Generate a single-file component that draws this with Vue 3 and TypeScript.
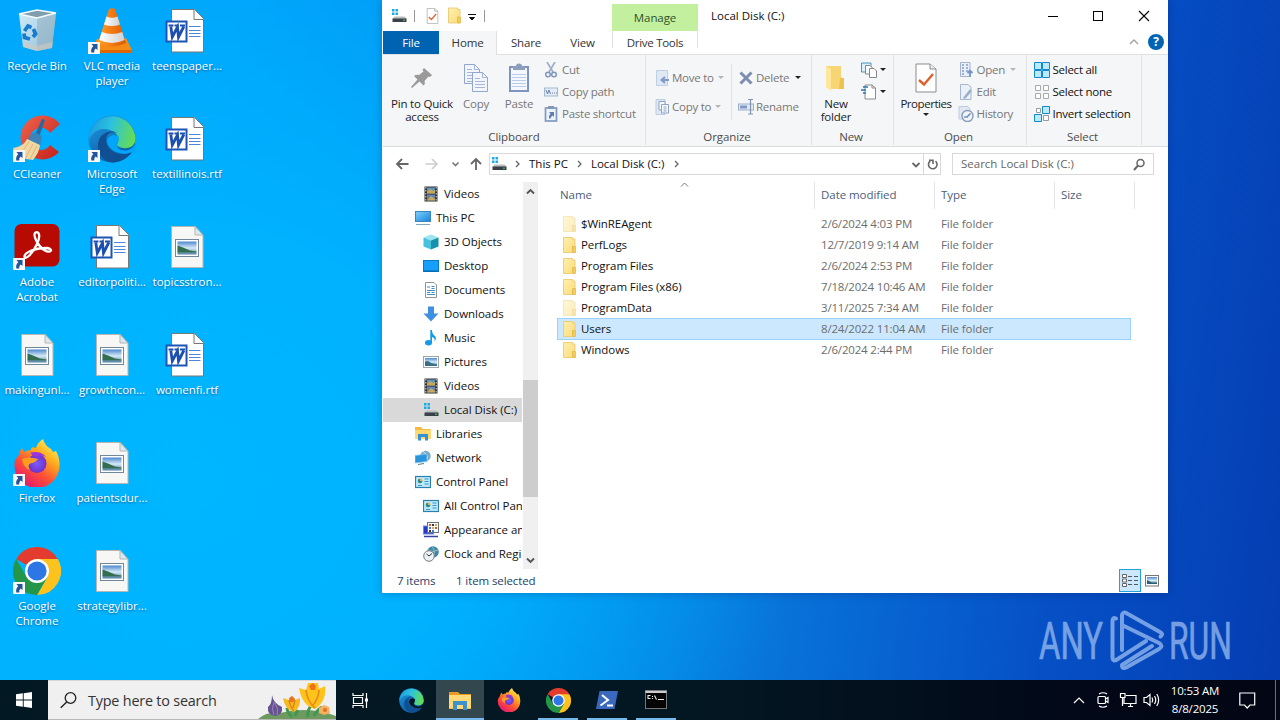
<script setup lang="ts">
interface DesktopItem { icon: string; lines: string[]; shortcut?: boolean }
interface TreeItem { icon: string; label: string; level: number; selected?: boolean }
interface FileRow { name: string; date: string; faded?: boolean; selected?: boolean }
interface Task { icon: string; size: number; state: string }

const desktop: (DesktopItem | null)[] = [
  { icon: 'recycle', lines: ['Recycle Bin'] },
  { icon: 'vlc', lines: ['VLC media', 'player'], shortcut: true },
  { icon: 'word', lines: ['teenspaper...'] },
  { icon: 'ccleaner', lines: ['CCleaner'], shortcut: true },
  { icon: 'edge', lines: ['Microsoft', 'Edge'], shortcut: true },
  { icon: 'word', lines: ['textillinois.rtf'] },
  { icon: 'acrobat', lines: ['Adobe', 'Acrobat'], shortcut: true },
  { icon: 'word', lines: ['editorpoliti...'] },
  { icon: 'image', lines: ['topicsstron...'] },
  { icon: 'image', lines: ['makingunl...'] },
  { icon: 'image', lines: ['growthcon...'] },
  { icon: 'word', lines: ['womenfi.rtf'] },
  { icon: 'firefox', lines: ['Firefox'], shortcut: true },
  { icon: 'image', lines: ['patientsdur...'] },
  null,
  { icon: 'chrome', lines: ['Google', 'Chrome'], shortcut: true },
  { icon: 'image', lines: ['strategylibr...'] },
  null,
]

const tree: TreeItem[] = [
  { icon: 'film', label: 'Videos', level: 2 },
  { icon: 'pc', label: 'This PC', level: 1 },
  { icon: 'cube', label: '3D Objects', level: 2 },
  { icon: 'desk', label: 'Desktop', level: 2 },
  { icon: 'doc', label: 'Documents', level: 2 },
  { icon: 'down', label: 'Downloads', level: 2 },
  { icon: 'music', label: 'Music', level: 2 },
  { icon: 'pics', label: 'Pictures', level: 2 },
  { icon: 'film', label: 'Videos', level: 2 },
  { icon: 'drive', label: 'Local Disk (C:)', level: 2, selected: true },
  { icon: 'libs', label: 'Libraries', level: 1 },
  { icon: 'net', label: 'Network', level: 1 },
  { icon: 'cpl', label: 'Control Panel', level: 1 },
  { icon: 'cpl', label: 'All Control Pan', level: 2 },
  { icon: 'appear', label: 'Appearance an', level: 2 },
  { icon: 'clock', label: 'Clock and Regi', level: 2 },
]

const files: FileRow[] = [
  { name: '$WinREAgent', date: '2/6/2024 4:03 PM', faded: true },
  { name: 'PerfLogs', date: '12/7/2019 9:14 AM' },
  { name: 'Program Files', date: '2/6/2024 2:53 PM' },
  { name: 'Program Files (x86)', date: '7/18/2024 10:46 AM' },
  { name: 'ProgramData', date: '3/11/2025 7:34 AM', faded: true },
  { name: 'Users', date: '8/24/2022 11:04 AM', selected: true },
  { name: 'Windows', date: '2/6/2024 2:44 PM' },
]

const tasks: Task[] = [
  { icon: 'edge', size: 25, state: '' },
  { icon: 'explorer', size: 24, state: 'active' },
  { icon: 'firefox', size: 24, state: '' },
  { icon: 'chrome', size: 25, state: 'open' },
  { icon: 'pshell', size: 24, state: 'open' },
  { icon: 'cmd', size: 24, state: 'open' },
]
</script>

<template>
  <main class="screen">
    <svg class="sheet" width="0" height="0">
      <defs>
        <linearGradient id="gBin" x1="0" y1="0" x2="1" y2="1"><stop offset="0" stop-color="#f2f6f8" /><stop offset="1" stop-color="#a9c3d3" /></linearGradient>
        <linearGradient id="gCone" x1="0" x2="1"><stop offset="0" stop-color="#ffa32b" /><stop offset=".45" stop-color="#f57c12" /><stop offset="1" stop-color="#d95a06" /></linearGradient>
        <linearGradient id="gWhite" x1="0" x2="1"><stop offset="0" stop-color="#fff" /><stop offset="1" stop-color="#cfcfcf" /></linearGradient>
        <linearGradient id="gEdgeTop" x1="0" y1=".3" x2="1" y2=".5"><stop offset="0" stop-color="#1b9de2" /><stop offset=".45" stop-color="#2cc2dd" /><stop offset="1" stop-color="#65dc55" /></linearGradient>
        <linearGradient id="gEdgeBase" x1="0" y1="0" x2=".6" y2="1"><stop offset="0" stop-color="#1e9be3" /><stop offset="1" stop-color="#0c59a4" /></linearGradient>
        <linearGradient id="gFox" x1=".85" y1=".05" x2=".25" y2=".95"><stop offset="0" stop-color="#fff44f" /><stop offset=".35" stop-color="#ffa51e" /><stop offset=".65" stop-color="#ff5036" /><stop offset="1" stop-color="#e5196e" /></linearGradient>
        <radialGradient id="gFoxIn"><stop offset="0" stop-color="#7a5cff" /><stop offset="1" stop-color="#7130c8" /></radialGradient>
        <linearGradient id="gPhoto" x1="0" y1="0" x2="0" y2="1"><stop offset="0" stop-color="#4d88cf" /><stop offset=".5" stop-color="#d5e9f6" /><stop offset="1" stop-color="#4f7fa8" /></linearGradient>
        <linearGradient id="gFold" x1="0" y1="0" x2="1" y2="1"><stop offset="0" stop-color="#fff0ae" /><stop offset="1" stop-color="#fadb79" /></linearGradient>
        <linearGradient id="gScreen" x1="0" y1="0" x2="1" y2="1"><stop offset="0" stop-color="#7fd0fb" /><stop offset="1" stop-color="#1784dc" /></linearGradient>
        <linearGradient id="gRed" x1="0" y1="0" x2="1" y2="1"><stop offset="0" stop-color="#f0654e" /><stop offset="1" stop-color="#c3201b" /></linearGradient>
      </defs>

      <symbol id="recycle" viewBox="0 0 48 48">
        <path d="M6 7 L24 11 L43 6 L39 41 L24 44 L10 40Z" fill="url(#gBin)" opacity=".86" />
        <path d="M24 11 L43 6 L39 41 L24 44Z" fill="#90adbc" opacity=".55" />
        <path d="M10 35 L24 39 L39.500 35 L39 41 L24 44 L10.500 40Z" fill="#d5c9bd" opacity=".6" />
        <path d="M6 7 L24 3 L43 6 L24 11Z" fill="#809fae" stroke="#f6fbfd" stroke-width="1.300" />
        <g fill="none" stroke="#167cd0" stroke-width="3.800"><path d="M11.500 24 L15 19 L18.500 20.500" /><path d="M20.500 22 L22.500 27 L20 30" /><path d="M17 32 L11.500 30.500 L11 26.500" /></g>
      </symbol>
      <symbol id="vlc" viewBox="0 0 48 48">
        <path d="M9 32 L38 31 L44.500 44 Q44 46 41 46 L5 46 Q2 45 3 43Z" fill="#f68b13" />
        <path d="M4 43 L44 43 L44 46 L5 46Z" fill="#dd6707" />
        <path d="M21 2 Q24 .5 27 2 L38 36 Q24 43 10 36Z" fill="url(#gCone)" />
        <path d="M18.500 9.500 Q24 12 29.500 9.500 L32 17.500 Q24 20.500 16 17.500Z" fill="url(#gWhite)" />
        <path d="M13.800 25 Q24 29 34.300 25 L36.700 33 Q24 39 11.300 33Z" fill="url(#gWhite)" />
      </symbol>
      <symbol id="word" viewBox="0 0 48 48">
        <path d="M8.500 2.500 H31.500 L40.500 11.500 V45 H8.500Z" fill="#fff" stroke="#777" stroke-width="1" />
        <path d="M31 2.500 V12.500 H40.500" fill="#fff" stroke="#777" stroke-width="1" />
        <path d="M26 19.500H37.500M26 23.500H37.500M26 26.500H37.500M26 29.500H37.500" stroke="#4c86d6" stroke-width="1.200" />
        <rect x="3.500" y="14.500" width="20" height="20" fill="#fff" stroke="#1d55b5" stroke-width="2" />
        <path d="M5.500 18.500h5M11.500 18.500h4M17 18.500h5" stroke="#1d4faf" stroke-width="2" />
        <path d="M7.800 19.500 L9.300 30 L14.500 20 L15.500 30 L20.800 19.500" fill="none" stroke="#1d4faf" stroke-width="2.800" />
      </symbol>
      <symbol id="image" viewBox="0 0 48 48">
        <path d="M8.500 3.500 H32 L40 12 V44.500 H8.500Z" fill="#f7f7f6" stroke="#b9b5b0" />
        <path d="M32 3.500 V12 H40Z" fill="#d9eaf2" stroke="#b9b5b0" />
        <rect x="12.500" y="16.500" width="23" height="17" fill="#fff" stroke="#73879a" />
        <rect x="14.500" y="18.500" width="19" height="13" fill="url(#gPhoto)" />
        <path d="M14.500 22.500 L20 24.500 L27 27.500 L33.500 28.500 V29.500 H14.500Z" fill="#326d50" />
      </symbol>
      <symbol id="ccleaner" viewBox="0 0 48 48">
        <path d="M47 9 A22 22 0 1 0 46 37 L37 30 A11 11 0 1 1 37 18Z" fill="url(#gRed)" />
        <path d="M29 4 L32 5 L26 22 L22 20Z" fill="#27699e" />
        <path d="M18 19 Q24 16 29 22 L27 31 L15 24Z" fill="#3c83b9" />
        <path d="M14 24 L27 30 Q26 38 20 45 L7 43 Q1 38 0 33 Q10 32 14 24Z" fill="#f3d7a2" />
        <path d="M16 27 L7 40M20 29L12 44M24 31L17 44" stroke="#dcb878" stroke-width="1" />
      </symbol>
      <symbol id="edge" viewBox="0 0 48 48">
        <circle cx="24" cy="24" r="23.500" fill="url(#gEdgeBase)" />
        <path d="M1 20 A23.500 23.500 0 0 1 47.500 24 C47.500 31 41 34 35 33 C31 32.500 28.500 31 29 29 C34 21 25 14 16 14 C8 14 2 20 1 26Z" fill="url(#gEdgeTop)" />
        <path d="M18 25 C18 18 24 16 29 18 C22 14 11 19 10 29 C9 39 16 46 24 47.500 C33 47.500 41 42 44 37 C32 43 18 36 18 25Z" fill="#104f91" />
        <path d="M29.500 28 C27 32 32 36 38 35.500 C42 35 46 32 47.500 28 L48 38 L44 37 C34 42 20 36 19 26 C20 20 27 18 31 22Z" fill="var(--cut, #00a6fc)" />
      </symbol>
      <symbol id="acrobat" viewBox="0 0 48 48">
        <rect x="1.500" y="1" width="45" height="42.500" rx="7" fill="#b70a03" />
        <path d="M22 10 C26 7 28 13 24 21 C20 30 13 37 11.500 34 C11 30 20 25 34 25 C41 26 38 31 31 27 C25 23 20 13 22 10Z" fill="none" stroke="#fff" stroke-width="2.300" />
      </symbol>
      <symbol id="firefox" viewBox="0 0 48 48">
        <path d="M6 16 Q6 12 9 9 L11 13 Q14 11 18 11 Q17 7 23 9 Q24 4 30 0 Q32 7 38 10 L40 13 L43 12 Q47 19 46.500 27 A22.500 22.500 0 0 1 1.500 26 Q1 21 6 16Z" fill="url(#gFox)" />
        <circle cx="24" cy="24.500" r="9.500" fill="url(#gFoxIn)" />
        <path d="M9 20 Q16 17 25 20 Q22 24 17 24.500 Q14 27 17 31 Q10 29 9 20Z" fill="#ff9c1e" />
        <path d="M17 14 Q27 11 33 18 Q28 15 22 18Z" fill="#9b35dd" />
      </symbol>
      <symbol id="chrome" viewBox="0 0 48 48">
        <path d="M24 24 L3.200 12 A24 24 0 0 1 44.800 12Z" fill="#e33b2e" />
        <path d="M24 12 H44.800 A24 24 0 0 1 24 48 L34.400 30Z" fill="#fcc31e" />
        <path d="M3.200 12 A24 24 0 0 0 24 48 L34.400 30 H13.600Z" fill="#23964a" />
        <circle cx="24" cy="24" r="12" fill="#fff" /><circle cx="24" cy="24" r="9.600" fill="#2e75e6" />
      </symbol>
      <symbol id="arrow" viewBox="0 0 12 12">
        <rect width="12" height="12" fill="#f8f8f8" /><path d="M3.500 2 H9.500 V8 L7.700 6.500 Q6 7.500 6.200 10.500 H3.300 Q2.500 6.500 5.300 4.300Z" fill="#24559b" />
      </symbol>

      <symbol id="drive" viewBox="0 0 16 16">
        <path d="M1 1h2.500v2.500H1zM4.500 1H7v2.500H4.500zM1 4.500h2.500V7H1zM4.500 4.500H7V7H4.500z" fill="#19abe5" />
        <path d="M3.500 8.500 H13.500 L15.500 10.500 V11 H1.500Z" fill="#b9bec1" /><rect x="1.500" y="10.500" width="14" height="3.500" fill="#394047" /><rect x="12" y="11.700" width="2" height="1" fill="#3fe15a" />
      </symbol>
      <symbol id="pc" viewBox="0 0 16 16"><rect x=".5" y="1.500" width="15" height="10" fill="url(#gScreen)" stroke="#3a86bb" /><path d="M1 14.500H15" stroke="#7fa7c2" stroke-width="1" /></symbol>
      <symbol id="desk" viewBox="0 0 16 16"><rect x=".5" y="2.500" width="15" height="11" fill="#16a0fb" stroke="#0879c7" /><path d="M1 13H15" stroke="#0564aa" /></symbol>
      <symbol id="cube" viewBox="0 0 16 16"><path d="M8 .5 L15.500 3.500 L8 6.500 L.5 3.500Z" fill="#9ae5f1" /><path d="M.5 3.500 L8 6.500 V15.500 L.5 12.500Z" fill="#48c2dc" /><path d="M15.500 3.500 L8 6.500 V15.500 L15.500 12.500Z" fill="#1691ae" /></symbol>
      <symbol id="doc" viewBox="0 0 16 16"><path d="M2.500.5H11L13.500 3V15.500H2.500Z" fill="#fff" stroke="#8a959c" /><path d="M4 5h3M8.500 4.500h3M8.500 6.500h3M4 8.500h8M4 10.500h3M8.500 10.500h3M4 12.500h8" stroke="#3e8dc6" stroke-width="1.100" /></symbol>
      <symbol id="down" viewBox="0 0 16 16"><path d="M5 0.500h6v7h4.500L8 15.500.5 7.500H5Z" fill="#3c90df" /></symbol>
      <symbol id="music" viewBox="0 0 16 16"><ellipse cx="5.500" cy="12.800" rx="3.500" ry="2.700" fill="#109be9" /><path d="M7.300 0 H9 Q9 4 12 6 Q14 8.500 11.500 11.500 Q12.500 8 9 7 V13 H7.300Z" fill="#109be9" /></symbol>
      <symbol id="pics" viewBox="0 0 16 16"><rect x=".5" y="2.500" width="15" height="11" fill="#fff" stroke="#9aa5ad" /><rect x="2" y="4" width="12" height="8" fill="url(#gPhoto)" /><path d="M2 7.500 Q5 6 8 9 L14 10.500 V12 H2Z" fill="#386f88" /></symbol>
      <symbol id="film" viewBox="0 0 16 16"><rect x="1.500" y=".5" width="13" height="15" fill="#333" /><rect x="4" y="1.500" width="8" height="6" fill="#5d93bd" /><rect x="4" y="8.500" width="8" height="6" fill="#6784ae" /><path d="M4 6 L7 3 L10 5 L12 4 V7.500 H4ZM4 14.500 L8 10 L12 13 V14.500Z" fill="#cca95a" /><path d="M2.800 1V16M13.200 1V16" stroke="#ddd" stroke-width="1" stroke-dasharray="1.500 1.500" /></symbol>
      <symbol id="libs" viewBox="0 0 16 16"><path d="M0 1h6l1.500 2H15.500V13H0Z" fill="#f6b93f" /><path d="M0 4h16v9H0z" fill="#ffda72" /><path d="M3 8h10v6.500h-3V11H6v3.500H3Z" fill="#3492d9" /></symbol>
      <symbol id="net" viewBox="0 0 16 16"><circle cx="10.500" cy="6" r="5.200" fill="#7babc4" /><path d="M8 1.500Q15 6 11 11" stroke="#d8edf5" fill="none" /><path d="M0 5.500 L12 4 V11.500 L0 13Z" fill="#2994dc" stroke="#87caf1" stroke-width=".8" /><path d="M3 14.500 L9 13.500" stroke="#577a91" /></symbol>
      <symbol id="cpl" viewBox="0 0 16 16"><rect x=".5" y="2.500" width="15" height="11" fill="#bdeafa" stroke="#2c7fae" stroke-width="1.200" /><circle cx="5" cy="7" r="2.300" fill="#278c91" /><path d="M5 7V4.500A2.500 2.500 0 0 1 7.500 7Z" fill="#efb544" /><path d="M9.500 5h4M9.500 7.500h4M9.500 10h4M3 11.500h4" stroke="#3d94d2" stroke-width="1.200" /></symbol>
      <symbol id="appear" viewBox="0 0 16 16"><rect x=".5" y="4" width="10" height="8" fill="#253bc5" stroke="#7385e9" /><path d="M1 14.500h14" stroke="#3442a5" stroke-width="1.500" /><rect x="4.500" y=".5" width="11" height="10" fill="#fff" stroke="#68747d" /><path d="M6 2h2v2H6zM12 5h2v2h-2z" fill="#d85233" /><path d="M9 2h2v2H9zM6 8h2v2H6z" fill="#383838" /><path d="M12 2h2v2h-2zM9 5h2v2H9z" fill="#e7aa3c" /><path d="M6 5h2v2H6zM9 8h2v2H9z" fill="#3a7cd0" /></symbol>
      <symbol id="clock" viewBox="0 0 16 16"><circle cx="10" cy="6" r="5.800" fill="#3d86a8" /><path d="M9 .5Q13 5 10 11M5 4Q10 7 15 4" stroke="#98c1bb" fill="none" /><circle cx="6" cy="10" r="5.300" fill="#edf2f5" stroke="#737e87" /><path d="M6 10L3.500 8M6 10L9 7.500" stroke="#333" fill="none" /></symbol>

      <symbol id="folder" viewBox="0 0 16 16"><path d="M2.500.5H11.500V2H14V15.500H2.500Z" fill="url(#gFold)" stroke="#ebca72" stroke-width=".9" /><path d="M11.500 9V15.500M12 9.500H14.500V15.500H12Z" stroke="#e3b94c" stroke-width=".7" fill="#f6cf5c" /></symbol>
      <symbol id="props" viewBox="0 0 22 30"><path d="M1 1H15L21 6V29H1Z" fill="#fff" stroke="#8b8b8b" stroke-width="1" /><path d="M15 1V6H21" fill="#eee" stroke="#8b8b8b" /><path d="M4 17L9 21.500L18 11" fill="none" stroke="#dc602f" stroke-width="2.400" /></symbol>
      <symbol id="bigfolder" viewBox="0 0 20 28"><path d="M1 2H16V13L19 15V25H5L1 23Z" fill="#f7d574" /><path d="M1 2L6 5V27L1 23Z" fill="#ffe79c" /><path d="M15 14H19V25H14Z" fill="#efc24d" /></symbol>
      <symbol id="pin" viewBox="0 0 24 24"><path d="M14 2 L22 9 L20 11 L18.500 10.500 L14.500 15 Q15.500 18 13.500 19.500 L9.500 15.500 L2 22 L1 21 L7.500 13.500 L4 10 Q6 8 9 9 L13.500 5.500 L12.500 4Z" fill="#9a9a9a" /></symbol>
      <symbol id="copy" viewBox="0 0 26 30"><g fill="#f2f6fc" stroke="#91a6cf"><path d="M1.500 1.500H11.500L16.500 6.500V20.500H1.500Z" /><path d="M11.500 1.500V6.500H16.500M4 6.500H9M4 9.500H14M4 12.500H14M4 15.500H14M4 18.500H14" fill="none" stroke-width=".8" /><path d="M9.500 9.500H19.500L24.500 14.500V28.500H9.500Z" /><path d="M19.500 9.500V14.500H24.500M12 15.500H17M12 18.500H22M12 21.500H22M12 24.500H22" fill="none" stroke-width=".8" /></g></symbol>
      <symbol id="paste" viewBox="0 0 22 30"><rect x="2" y="4" width="18" height="24" fill="#f4f7fc" stroke="#7e93be" stroke-width="2" /><path d="M5 3H8Q8 .5 11 .5T14 3H17V7H5Z" fill="#8d9dbc" /><path d="M4 11.500H18M4 14.500H18M4 17.500H18M4 20.500H18M4 23.500H18" stroke="#b4c5e8" stroke-width=".9" /></symbol>
      <symbol id="cut" viewBox="0 0 14 16"><path d="M3 0L9 10M11 0L5 10" stroke="#a0afc8" stroke-width="1.700" /><circle cx="4" cy="12.500" r="2.300" fill="none" stroke="#8095be" stroke-width="1.500" /><circle cx="10" cy="12.500" r="2.300" fill="none" stroke="#8095be" stroke-width="1.500" /></symbol>
      <symbol id="path" viewBox="0 0 14 16"><rect x=".5" y="4" width="13" height="8" fill="#e4edf8" stroke="#a5b7d0" /><path d="M2 6l1.500 4L5 6l1.500 4M8 9h1M10 9h1M12 9h1" fill="none" stroke="#6c80a7" /></symbol>
      <symbol id="pasteshort" viewBox="0 0 14 16"><rect x="1.500" y="2" width="11" height="13" fill="#edf3fb" stroke="#8298c1" stroke-width="1.700" /><path d="M4 0h6v3H4z" fill="#8496b5" /><path d="M5 6h5v5L8.500 9.500Q7 10.500 6.500 12.500H5Q4.500 9.500 6.500 7.800Z" fill="#617fae" /></symbol>
      <symbol id="moveto" viewBox="0 0 16 16"><path d="M2.500.5H13.500V15.500H2.500Z" fill="#dfe9f6" stroke="#c0cee2" /><path d="M15 10H8M11 7L7.500 10 11 13" fill="none" stroke="#829bc6" stroke-width="2" /></symbol>
      <symbol id="copyto" viewBox="0 0 16 16"><path d="M2 .5H11V15.500H2Z" fill="#dfe9f6" stroke="#bdccde" /><path d="M5 2.500H11V11H5Z" fill="#f6f9fc" stroke="#8da3c8" /><path d="M7.500 5.500H14.500V14H7.500ZM9.500 8h3M9.500 10h3M9.500 12h3" fill="#f6f9fc" stroke="#8da3c8" /></symbol>
      <symbol id="delete" viewBox="0 0 16 16"><path d="M2.500 2.500L13.500 13.500M13.500 2.500L2.500 13.500" stroke="#7d8db2" stroke-width="3" /></symbol>
      <symbol id="rename" viewBox="0 0 16 16"><rect x=".5" y="5" width="15" height="6" fill="#e3eaf4" stroke="#9aaed0" /><path d="M2 6.500h7v3H2z" fill="#8298c2" /><path d="M10 .5h5M10 15h5M12.500 1v14" stroke="#8294b6" stroke-width="1.200" /></symbol>
      <symbol id="newitem" viewBox="0 0 16 16"><path d="M.5 1H10V10H.5Z" fill="#d9f2fc" stroke="#4e93b9" /><path d="M4.500 3.500H9L11 5.500V12H4.500Z" fill="#fff" stroke="#888" /><path d="M8.500 6.500H13L15.500 9V15.500H8.500Z" fill="#fff" stroke="#888" /></symbol>
      <symbol id="easy" viewBox="0 0 16 16"><path d="M4 1H11L14.500 4V15H4Z" fill="#fff" stroke="#8b8b8b" /><path d="M11 1V4H14.500" fill="none" stroke="#8b8b8b" /><path d="M2 3h5M0 6h5M2 9h3" stroke="#2478b5" stroke-width="1.400" /></symbol>
      <symbol id="open" viewBox="0 0 16 16"><path d="M2.500.5H12V14.500H2.500Z" fill="#e8eff9" stroke="#a4b3cf" /><path d="M4 3h2M4 6h2M4 9h2M8 3h2M8 6h2M8 9h2M4 12h2" stroke="#869dc3" stroke-width="1.500" /><path d="M12 15V9M9.500 11L12 8.500L14.500 11" stroke="#7795c8" fill="none" stroke-width="1.800" /></symbol>
      <symbol id="edit" viewBox="0 0 16 16"><path d="M2.500.5H10L13 3V15.500H2.500Z" fill="#eaf1fa" stroke="#a7b7d1" /><path d="M5 14L12 5L14 7L7 15Z" fill="#9daeca" /></symbol>
      <symbol id="history" viewBox="0 0 16 16"><path d="M1 .5H10L12 3V13H1Z" fill="#dfe8f3" stroke="#becbdf" /><circle cx="9.500" cy="10" r="5.500" fill="#f1f5fa" stroke="#8a9cbb" stroke-width="1.400" /><path d="M9 11L12.500 7.500M6 11h4" stroke="#7190c5" stroke-width="1.700" /></symbol>
      <symbol id="selall" viewBox="0 0 16 16"><path d="M.5.500H7.500V7.500H.5ZM8.500 .5H15.500V7.500H8.500ZM.5 8.500H7.500V15.500H.5ZM8.500 8.500H15.500V15.500H8.500Z" fill="#b9eaff" stroke="#1488cc" /></symbol>
      <symbol id="selnone" viewBox="0 0 16 16"><path d="M1.500 1.500H6.500V6.500H1.500ZM9.500 1.500H14.500V6.500H9.500ZM1.500 9.500H6.500V14.500H1.500ZM9.500 9.500H14.500V14.500H9.500Z" fill="#fff" stroke="#aaa" /></symbol>
      <symbol id="selinv" viewBox="0 0 16 16"><path d="M2.500 2.500H6.500V6.500H2.500ZM9.500 9.500H14.500V14.500H9.500Z" fill="#fff" stroke="#999" /><path d="M8.500.5H15.500V7.500H8.500ZM.5 8.500H7.500V15.500H.5Z" fill="#b9eaff" stroke="#1488cc" /></symbol>

      <symbol id="explorer" viewBox="0 0 24 24"><path d="M1 4h9l2 2h11v4H1Z" fill="#e89c25" /><path d="M1 7H23V21H1Z" fill="#ffd977" /><path d="M5 13H19V22H15V17H9V22H5Z" fill="#3d93c9" /><path d="M1 20h4v1H1zM19 20h4v1h-4z" fill="#f4b947" /></symbol>
      <symbol id="pshell" viewBox="0 0 24 24"><path d="M4.500 3H23L19.500 21H1Z" fill="#3968bd" /><path d="M7 7L13 12L5.500 17.500M12 17.500H18" fill="none" stroke="#fff" stroke-width="2" /></symbol>
      <symbol id="cmd" viewBox="0 0 24 24"><rect x="1.500" y="2.500" width="21" height="18" fill="#050505" stroke="#777" /><path d="M1.500 4H22.500" stroke="#ccc" stroke-width="2" /><path d="M6.500 7.500H4V10.500H6.500M8.500 8v1M8.500 10v1M10.500 7.500L12.500 11.500M14 11.500H20" stroke="#eee" fill="none" stroke-width="1.100" /></symbol>
    </svg>

    <section class="desktop">
      <div v-for="(d, i) in desktop" :key="i" class="cell">
        <template v-if="d">
          <div class="pic">
            <svg width="48" height="48"><use :href="'#' + d.icon" /></svg>
            <svg v-if="d.shortcut" class="badge" width="12" height="12"><use href="#arrow" /></svg>
          </div>
          <div v-for="l in d.lines" :key="l" class="cap">{{ l }}</div>
        </template>
      </div>
    </section>

    <svg class="brand" width="200" height="70" viewBox="0 0 200 70">
      <g fill="#9bbdf0" stroke="#9bbdf0" stroke-width=".7" class="brand-text">
        <text x="3" y="54" textLength="64" lengthAdjust="spacingAndGlyphs">ANY</text>
        <text x="133" y="54" textLength="63" lengthAdjust="spacingAndGlyphs">RUN</text>
      </g>
      <g fill="none" stroke="#9bbdf0" stroke-width="4" stroke-linecap="round" stroke-linejoin="round">
        <path d="M80 13.500 Q76.500 12 76.500 16 V53 Q77 57 81 54.500 L110 36" />
        <path d="M86 45 V10 Q87 6 91 8.500 L124 27 Q128 29 124.500 31.500" />
        <path d="M88 21 L123 38 Q128 41 123 44 L91 62 Q86 65 86 60 L116 41" />
      </g>
    </svg>

    <section class="window">
      <header class="title">
        <svg class="qdrive" width="16" height="16"><use href="#drive" /></svg>
        <i class="bar b1" />
        <svg class="qprops" width="13" height="16"><use href="#props" /></svg>
        <svg class="qfolder" width="16" height="17"><use href="#folder" /></svg>
        <svg class="qdrop" width="8" height="8"><path d="M0 1.500H8M1.500 4.500H6.500L4 7Z" fill="#111" stroke="#111" stroke-width="1" /></svg>
        <i class="bar b2" />
        <span class="manage">Manage</span>
        <span class="caption">Local Disk (C:)</span>
        <svg class="controls" width="104" height="12" fill="none" stroke="#000"><path d="M0 6.500H10" /><rect x="45.500" y="1.500" width="9" height="9" /><path d="M91 1L101 11M101 1L91 11" stroke-width="1.100" /></svg>
      </header>
      <nav class="tabs">
        <span class="tab file">File</span><span class="tab home">Home</span><span class="tab share">Share</span><span class="tab view">View</span><span class="tab tools">Drive Tools</span>
        <svg class="fold" width="10" height="6"><path d="M1 5L5 1L9 5" fill="none" stroke="#a0a0a0" stroke-width="1.300" /></svg>
        <span class="help">?</span>
      </nav>

      <div class="ribbon">
        <div class="group clip">
          <div class="content">
            <div class="big w76"><svg width="24" height="24" class="pinico"><use href="#pin" /></svg><span>Pin to Quick<br>access</span></div>
            <div class="big w32 off"><svg width="26" height="30"><use href="#copy" /></svg><span>Copy</span></div>
            <div class="big w52 off"><svg width="22" height="30"><use href="#paste" /></svg><span>Paste</span></div>
            <div class="stack off trio">
              <div class="small"><svg width="14" height="16"><use href="#cut" /></svg>Cut</div>
              <div class="small"><svg width="14" height="16"><use href="#path" /></svg>Copy path</div>
              <div class="small"><svg width="14" height="16"><use href="#pasteshort" /></svg>Paste shortcut</div>
            </div>
          </div>
          <div class="gname">Clipboard</div>
        </div>
        <div class="group org">
          <div class="content">
            <div class="stack wide off first">
              <div class="small"><svg width="16" height="16"><use href="#moveto" /></svg>Move to<b class="dd pale" /></div>
              <div class="small"><svg width="16" height="16"><use href="#copyto" /></svg>Copy to<b class="dd pale" /></div>
            </div>
            <div class="stack wide off second">
              <div class="small"><svg width="16" height="16"><use href="#delete" /></svg>Delete<b class="dd far" /></div>
              <div class="small"><svg width="16" height="16"><use href="#rename" /></svg>Rename</div>
            </div>
          </div>
          <div class="gname near">Organize</div>
        </div>
        <div class="group new">
          <div class="content">
            <div class="big w46"><svg width="20" height="30" class="nf"><use href="#bigfolder" /></svg><span>New<br>folder</span></div>
            <div class="stack tight">
              <div class="small"><svg width="16" height="16"><use href="#newitem" /></svg><b class="dd" /></div>
              <div class="small"><svg width="16" height="16"><use href="#easy" /></svg><b class="dd" /></div>
            </div>
          </div>
          <div class="gname near">New</div>
        </div>
        <div class="group opn">
          <div class="content">
            <div class="big w64"><svg width="22" height="30"><use href="#props" /></svg><span>Properties</span><b class="dd under" /></div>
            <div class="stack off tight">
              <div class="small"><svg width="16" height="16"><use href="#open" /></svg>Open<b class="dd pale" /></div>
              <div class="small"><svg width="16" height="16"><use href="#edit" /></svg>Edit</div>
              <div class="small"><svg width="16" height="16"><use href="#history" /></svg>History</div>
            </div>
          </div>
          <div class="gname near">Open</div>
        </div>
        <div class="group sel">
          <div class="content">
            <div class="stack tight">
              <div class="small"><svg width="16" height="16"><use href="#selall" /></svg>Select all</div>
              <div class="small"><svg width="16" height="16"><use href="#selnone" /></svg>Select none</div>
              <div class="small"><svg width="16" height="16"><use href="#selinv" /></svg>Invert selection</div>
            </div>
          </div>
          <div class="gname near">Select</div>
        </div>
      </div>

      <div class="address">
        <svg class="arrows" width="92" height="16" fill="none" stroke-width="1.600">
          <path d="M2 8H13.500M7 3L2 8L7 13" stroke="#666" stroke-width="1.800" /><path d="M30.500 8H42M37 3L42 8L37 13" stroke="#ccc" />
          <path d="M57.500 6.500L60.500 9.500L63.500 6.500" stroke="#777" /><path d="M81 14V3M76 8L81 3L86 8" stroke="#666" stroke-width="1.800" />
        </svg>
        <div class="box">
          <svg width="16" height="16"><use href="#drive" /></svg>
          <svg class="sep s1" width="5" height="8"><path d="M1 1L4 4L1 7" fill="none" stroke="#666" stroke-width="1.300" /></svg>
          <span>This PC</span>
          <svg class="sep s2" width="5" height="8"><path d="M1 1L4 4L1 7" fill="none" stroke="#666" stroke-width="1.300" /></svg>
          <span>Local Disk (C:)</span>
          <svg class="sep s3" width="5" height="8"><path d="M1 1L4 4L1 7" fill="none" stroke="#666" stroke-width="1.300" /></svg>
          <svg class="ends" width="30" height="20" fill="none" stroke="#666"><path d="M2.500 9L6 12.500L9.500 9" stroke-width="1.800" /><path d="M13.500 0V20" stroke="#d9d9d9" /><path d="M20.300 7A4.300 4.300 0 1 0 25.500 7.200M19 6.200H23V10" stroke-width="1.600" /></svg>
        </div>
        <div class="search"><span>Search Local Disk (C:)</span><svg width="12" height="13"><circle cx="7.500" cy="5" r="3.500" fill="none" stroke="#666" stroke-width="1.500" /><path d="M5 7.500L1 12" stroke="#666" stroke-width="2" /></svg></div>
      </div>

      <div class="body">
        <div class="tree">
          <div v-for="(t, i) in tree" :key="i" class="node" :class="{ picked: t.selected, deep: t.level === 2 }">
            <svg width="16" height="16"><use :href="'#' + t.icon" /></svg><span>{{ t.label }}</span>
          </div>
        </div>
        <div class="scroll">
          <svg width="9" height="7"><path d="M1 5.500L4.500 2L8 5.500" fill="none" stroke="#555" stroke-width="1.900" /></svg>
          <div class="thumb" />
          <svg class="dn" width="9" height="7"><path d="M1 1.500L4.500 5L8 1.500" fill="none" stroke="#555" stroke-width="1.900" /></svg>
        </div>
        <div class="list">
          <div class="heads"><span class="c1">Name<svg class="sort" width="9" height="5"><path d="M1 4.500L4.500 1L8 4.500" fill="none" stroke="#777" /></svg></span><span class="c2">Date modified</span><span class="c3">Type</span><span class="c4">Size</span></div>
          <div v-for="f in files" :key="f.name" class="row" :class="{ chosen: f.selected }">
            <span class="name"><svg width="16" height="16" :class="{ faded: f.faded }"><use href="#folder" /></svg>{{ f.name }}</span><span class="date">{{ f.date }}</span><span class="kind">File folder</span>
          </div>
        </div>
      </div>
      <footer class="status">
        <span>7 items</span><span class="one">1 item selected</span>
        <span class="mode"><svg width="16" height="14" fill="none" stroke="#666"><path d="M.5.500h4v3h-4zM.5 5h4v3h-4zM.5 9.500h4v3h-4z" fill="#fff" /><path d="M6 2.500h4M12 2.500h4M6 6.500h4M12 6.500h4M6 10.500h4M12 10.500h4" stroke="#4c5960" /></svg></span>
        <svg class="large" width="14" height="12"><rect x=".5" y=".5" width="13" height="10.500" fill="#fff" stroke="#777" /><rect x="2" y="2" width="10" height="7" fill="url(#gPhoto)" /><path d="M2 5L7 7.500H12V9H2Z" fill="#2b6272" /></svg>
      </footer>
    </section>

    <footer class="taskbar">
      <div class="start"><svg width="16" height="16" fill="#fff"><path d="M0 2.300L6.800 1.300V7.600H0ZM7.700 1.200L16 0V7.600H7.700ZM0 8.400H6.800V14.700L0 13.700ZM7.700 8.400H16V16L7.700 14.800Z" /></svg></div>
      <div class="find">
        <svg width="17" height="17"><circle cx="10.500" cy="6" r="5.300" fill="none" stroke="#222" stroke-width="1.300" /><path d="M6.700 9.900L.7 15.800" stroke="#222" stroke-width="1.400" /></svg>
        <span>Type here to search</span>
        <svg class="flowers" width="78" height="38" viewBox="0 0 78 38">
          <path d="M0 38Q10 30 22 32Q50 25 78 35V38Z" fill="#6e9a60" />
          <path d="M34 36Q29 31 29 27M50 36Q49 29 53 25M56 35Q58 30 64 26M37 35L40 29" stroke="#3f9852" stroke-width="3" fill="none" />
          <path d="M14 14Q15 22 24 26Q25 34 17 35Q9 34 10 26Q14 23 14 14Z" fill="#65528f" /><path d="M16 21Q13 28 16 34M17 22Q21 28 19 34" stroke="#9b85b8" fill="none" />
          <path d="M25 17L31 19L34 15L37 19L42 17Q43 26 36 31Q27 29 25 17Z" fill="#f8b81f" /><path d="M31 19Q32 26 36 30M37 19L35 27" stroke="#dc8019" fill="none" stroke-width="1.300" /><path d="M31 17L34 15L37 18L35 21H32Z" fill="#ed721a" />
          <path d="M41 7L48 9L50 2H60L61 8L67 5Q69 20 57 28Q44 25 41 7Z" fill="#ffc31c" /><path d="M48 9Q49 20 57 27M61 9Q60 19 55 24" stroke="#e88b18" fill="none" stroke-width="1.700" /><path d="M51 5L55 2L58 5L57 9H53Z" fill="#ed721a" />
          <path d="M61 27L66 24L71 26L72 32L66 34L61 32Z" fill="#f7b05b" /><circle cx="67" cy="29" r="2" fill="#df7228" />
        </svg>
      </div>
      <div class="taskview"><svg width="17" height="17" fill="none" stroke="#fff" stroke-width="1.200"><path d="M1 1V3.500H11V1M1 16V13.500H11V16M1.500 5.500H10.500V11.500H1.500ZM14.500 1V16" /><path d="M13 6.500H16V9.500H13Z" fill="#fff" stroke="none" /></svg></div>
      <div v-for="t in tasks" :key="t.icon" class="task" :class="t.state"><svg :width="t.size" :height="t.size"><use :href="'#' + t.icon" /></svg></div>
      <div class="tray">
        <svg width="12" height="8"><path d="M1 7L6 2L11 7" fill="none" stroke="#fff" stroke-width="1.200" /></svg>
        <svg class="cam" width="14" height="18" fill="none" stroke="#fff" stroke-width="1.200"><rect x="2" y="5.500" width="7.500" height="7" rx="1" /><path d="M9.500 8L12 6.500V11.500L9.500 10M3 3Q7 .5 11 3M3 15Q7 17.500 11 15" /></svg>
        <svg class="lan" width="17" height="16" fill="none" stroke="#fff" stroke-width="1.200"><path d="M6 3.500H16V11.500H4V6M8 14.500H13M10.500 12V14.500M.5 1.500H5V5.500H.5ZM2.500 5.500V14" /></svg>
        <svg class="vol" width="17" height="16" fill="none" stroke="#fff" stroke-width="1.200"><path d="M1 5.500H3.500L7 2.500V13.500L3.500 10.500H1ZM9 5.500Q10.500 8 9 10.500M11.500 4Q14 8 11.500 12M13.800 2Q17.500 8 13.800 14" /></svg>
        <div class="when"><span>10:53 AM</span><span>8/8/2025</span></div>
        <svg class="note" width="17" height="17"><path d="M.8 1H15.700V13H11L8.200 16L5.500 13H.8Z" fill="none" stroke="#fff" stroke-width="1.200" /></svg>
        <i class="peek" />
      </div>
    </footer>
  </main>
</template>

<style>
html, body { margin: 0; overflow: hidden; }
</style>

<style scoped>
.screen { position: relative; width: 1280px; height: 720px; overflow: hidden; font: 11.5px/15px "Open Sans", "Noto Sans", sans-serif; color: #111; background: radial-gradient(ellipse 620px 560px at 180px 480px, #00b6ff 0%, #00b2ff 45%, rgba(0, 172, 255, 0) 100%), linear-gradient(97deg, #00a4fb 0%, #00a4fb 17%, #0094f0 38%, #0874da 62%, #0650c6 82%, #053db2 100%); }
.sheet { position: absolute; }
svg { display: block; flex: none; overflow: visible; }
.desktop { display: grid; grid-template-columns: repeat(3, 75px); grid-auto-rows: 108px; width: 225px; height: 648px; padding-top: 7px; box-sizing: content-box; }
.cell { display: flex; flex-direction: column; align-items: center; width: 74px; }
.pic { position: relative; height: 51px; }
.badge { position: absolute; left: 0; bottom: 4px; }
.cap { color: #fff; white-space: nowrap; letter-spacing: -.03px; text-shadow: 0 1px 2px rgba(0, 40, 90, .6); }
.brand { position: absolute; left: 1036px; top: 605px; opacity: .75; }
.brand-text { font: 51px "Roboto", sans-serif; }

.window { position: absolute; left: 382px; top: 0; width: 786px; height: 593px; box-sizing: border-box; padding-left: 1px; background: #fff; box-shadow: 0 1px 8px rgba(0, 20, 80, .25); }
.title { display: flex; align-items: center; height: 31px; }
.qdrive { margin-left: 8px; }
.bar { width: 1px; height: 12px; background: #999; }
.b1 { margin-left: 7px; } .qprops { margin-left: 11px; } .qfolder { margin-left: 7px; } .qdrop { margin: 3px 0 0 6px; } .b2 { margin-left: 8px; }
.manage { align-self: flex-end; width: 86px; height: 27px; margin-left: 127px; line-height: 28px; text-align: center; background: #c2f09f; color: #31502a; letter-spacing: -.1px; }
.caption { width: 130px; margin-left: 13px; }
.controls { margin-left: 207px; }
.tabs { display: flex; height: 23px; line-height: 24px; border-bottom: 1px solid #dfe0e1; color: #333; letter-spacing: -.15px; }
.tab { text-align: center; }
.file { width: 56px; background: #0063b1; color: #fff; }
.home { width: 57px; height: 24px; background: #f5f6f7; border-right: 1px solid #dfe0e1; }
.share { width: 58px; } .view { width: 55px; }
.tools { width: 86px; height: 17px; margin-left: 2px; border: solid #e0e0e0; border-width: 0 1px; box-sizing: border-box; white-space: nowrap; letter-spacing: -.3px; }
.fold { margin: 8px 0 0 431px; }
.help { width: 16px; height: 16px; margin: 3px 0 0 9px; border-radius: 50%; background: #0064b5; color: #fff; font-weight: 700; font-size: 12px; line-height: 16px; text-align: center; }

.ribbon { display: flex; height: 91px; background: #f5f6f7; border-bottom: 1px solid #dadbdc; letter-spacing: -.25px; }
.group { display: flex; flex-direction: column; box-sizing: border-box; border-right: 1px solid #e1e2e3; height: 90px; }
.clip { width: 263px; } .org { width: 166px; } .new { width: 82px; } .opn { width: 133px; } .sel { width: 115px; }
.content { display: flex; height: 75px; }
.gname { text-align: center; color: #4c4c4c; line-height: 14px; letter-spacing: -.1px; }
.near { padding-right: 3px; }
.big { display: flex; flex-direction: column; align-items: center; padding-top: 8px; text-align: center; line-height: 13px; white-space: nowrap; color: #222; letter-spacing: -.2px; }
.big span { margin-top: 4px; }
.w76 { width: 76px; margin-left: 1px; } .w32 { width: 32px; } .w52 { width: 54px; margin-right: -2px; } .w46 { width: 46px; margin-left: 1px; } .w64 { width: 64px; letter-spacing: -.45px; }
.pinico { margin: 3px 0; }
.off, .big.off { color: #777; }
.stack { padding-top: 4px; }
.small { display: flex; align-items: center; gap: 4px; height: 22px; white-space: nowrap; box-sizing: border-box; }
.trio .small, .tight .small { padding-bottom: 2px; }
.trio .small svg, .tight .small svg { margin-top: 2px; }
.tight .small { gap: 2.5px; }
.wide { padding-top: 8px; } .wide .small { height: 29px; gap: 2px; }
.first { width: 77px; padding-left: 8px; }
.second { padding-left: 7px; position: relative; }
.second::before { content: ""; position: absolute; left: 0; top: 9px; width: 1px; height: 56px; background: #e1e2e3; }
.dd { width: 0; height: 0; border: solid transparent; border-width: 3px 3px 0; border-top-color: #222; }
.pale { border-top-color: #b5b5b5; }
.small .dd { margin-left: 2px; } .small .far { margin-left: 4px; }
.new .stack { margin-left: 2px; } .new .small .dd { margin-left: 0; }
.nf { margin-left: -3px; }
.under { margin-top: 3px; }
.opn .stack { margin-left: 0; } .sel .stack { margin-left: 7px; }

.address { display: flex; align-items: center; height: 34px; margin-bottom: 1px; }
.address span { margin-top: -1px; }
.arrows { margin-left: 12px; }
.box, .search { display: flex; align-items: center; height: 20px; border: 1px solid #d9d9d9; }
.box { width: 450px; margin-left: 2px; }
.box > svg:first-child { margin-left: 1px; }
.s1 { margin: 0 9px 0 8px; } .s2 { margin: 0 9px; } .s3 { margin-left: 10px; }
.ends { margin-left: auto; }
.search { width: 200px; margin-left: 11px; color: #666; }
.search span { margin-left: 8px; } .search svg { margin-left: auto; margin-right: 8px; }

.body { display: flex; height: 387px; }
.tree { width: 139px; overflow: hidden; }
.node { display: flex; align-items: center; height: 24px; padding-left: 32px; gap: 5px; white-space: nowrap; }
.node span { margin-top: -2px; letter-spacing: -.03px; }
.deep { padding-left: 40px; }
.picked { background: #d9d9d9; }
.scroll { width: 15px; margin-left: 1px; background: #f0f0f0; display: flex; flex-direction: column; align-items: center; padding-top: 6px; box-sizing: border-box; }
.thumb { width: 15px; height: 117px; margin-top: 185px; background: #cdcdcd; }
.dn { margin: auto 0 5px; }
.list { width: 596px; margin-left: 18px; }
.heads { display: flex; height: 27px; line-height: 25px; margin-bottom: 4px; color: #4c607a; }
.heads span { box-sizing: border-box; border-right: 1px solid #e5e5e5; padding-left: 6px; letter-spacing: -.05px; }
.heads .c1 { display: flex; width: 259px; padding-left: 4px; }
.sort { margin-left: 88px; }
.c2, .c3 { width: 120px; } .c4 { width: 80px; }
.row { display: flex; align-items: center; width: 574px; height: 21px; box-sizing: border-box; margin-left: 1px; letter-spacing: -.08px; }
.row span { color: #6d6d6d; white-space: nowrap; }
.row .name { display: flex; align-items: center; gap: 4px; width: 260px; padding-left: 4px; box-sizing: border-box; color: #111; }
.date { width: 120px; padding-left: 4px; box-sizing: border-box; letter-spacing: -.17px; } .kind { padding-left: 4px; }
.chosen { height: 22px; margin-bottom: -1px; padding-bottom: 1px; background: #cce8ff; box-shadow: inset 0 0 0 1px #99d1ff; }
.faded { opacity: .5; }
.status { display: flex; align-items: center; height: 23px; color: #263d69; letter-spacing: -.1px; }
.status > span:first-child { width: 45px; margin-left: 14px; }
.one { width: 100px; margin-left: 14px; }
.mode { display: flex; align-items: center; justify-content: center; width: 20px; height: 21px; margin-left: 563px; background: #cce8ff; border: 1px solid #26a0da; }
.large { margin-left: 4px; }

.taskbar { position: absolute; left: 0; bottom: 0; display: flex; width: 1280px; height: 40px; background: linear-gradient(90deg, #021923, #031722 55%, #020817 85%, #020615); }
.start { width: 48px; display: flex; align-items: center; justify-content: center; }
.find { display: flex; align-items: center; width: 288px; height: 40px; box-sizing: border-box; padding-left: 12px; background: #f0f0f0; border-bottom: 1px solid #b8b8b8; border-top: 1px solid #d8d8d8; color: #333; }
.find span { margin-left: 11px; font-size: 14.400px; letter-spacing: -.2px; white-space: nowrap; }
.flowers { margin-left: auto; }
.taskview { display: flex; align-items: center; justify-content: center; width: 48px; margin-right: 3px; }
.task { --cut: #031722; display: flex; align-items: center; justify-content: center; width: 48px; height: 40px; margin-right: 1px; box-sizing: border-box; }
.active { background: #33474f; box-shadow: inset 0 -2px #76b9ed; }
.open { background: linear-gradient(#76b9ed, #76b9ed) 4px 38px / 40px 2px no-repeat; }
.tray { display: flex; align-items: center; margin-left: auto; color: #fff; }
.tray > svg:first-child { margin-left: 0; }
.cam { margin-left: 11px; } .lan { margin-left: 10px; } .vol { margin-left: 6px; }
.when { display: flex; flex-direction: column; align-items: center; width: 54px; margin-left: 8px; line-height: 18px; white-space: nowrap; letter-spacing: -.2px; }
.note { margin-left: 17px; }
.peek { width: 1px; height: 40px; margin: 0 4px 0 19px; background: #69717a; }
</style>
